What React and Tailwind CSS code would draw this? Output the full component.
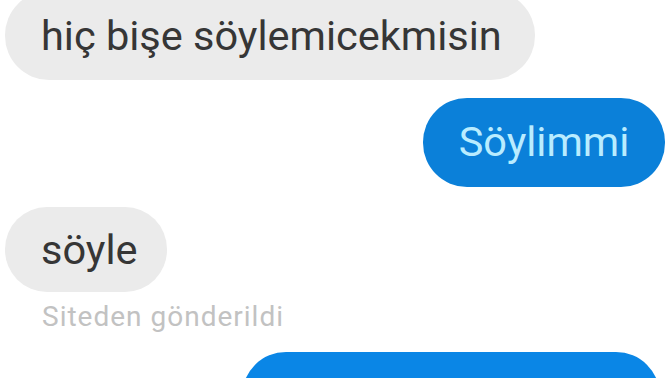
import React from 'react';

const font = { fontFamily: 'Roboto, "Noto Sans", sans-serif' };

export default function App() {
  return (
    <div className="w-[672px] h-[378px] overflow-hidden bg-white" style={font}>
      <div className="flex flex-col">
        <div className="-mt-[9px] ml-[5px] w-[530px] h-[89px] rounded-[44px] bg-[#ebebeb] flex items-center pl-[36px]">
          <span className="text-[41.5px] leading-none text-[#363636]">hiç bişe söylemicekmisin</span>
        </div>
        <div className="mt-[18px] mr-[7px] self-end w-[242px] h-[89px] rounded-[44px] bg-[#0b80d9] flex items-center justify-center pb-[2px]">
          <span className="text-[41.5px] leading-none text-[#b9ecff]">Söylimmi</span>
        </div>
        <div className="mt-[20px] ml-[5px] w-[162px] h-[85px] rounded-[42px] bg-[#ebebeb] flex items-center pl-[36px]">
          <span className="text-[41.5px] leading-none text-[#363636]">söyle</span>
        </div>
        <div className="mt-[10px] ml-[42px] text-[28px] leading-[30px] tracking-[1px] text-[#c2c2c2]">Siteden gönderildi</div>
        <div className="mt-[20px] mr-[12px] self-end w-[418px] h-[89px] rounded-[44px] bg-[#0a86e6]"></div>
      </div>
    </div>
  );
}
